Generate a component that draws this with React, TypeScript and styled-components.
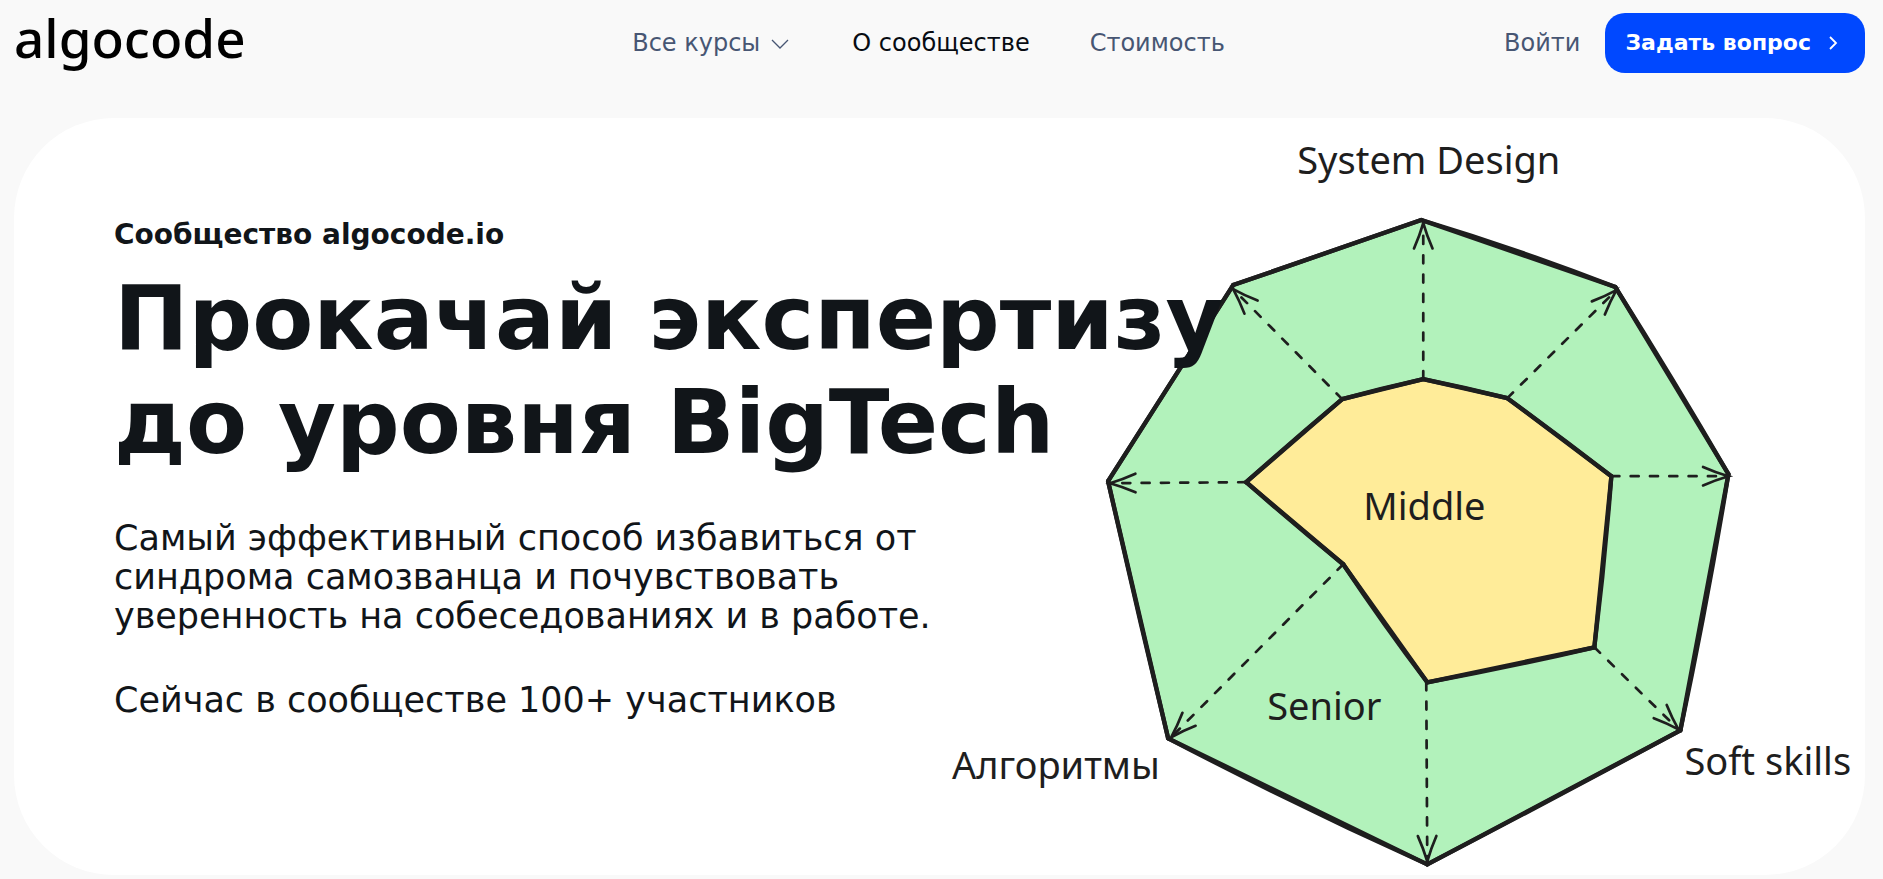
import React from 'react';
import styled, { createGlobalStyle } from 'styled-components';

const GlobalStyle = createGlobalStyle`
  *, *::before, *::after { box-sizing: border-box; }
  body {
    margin: 0;
    background: #f9f9f9;
    color: #111519;
    font-family: "DejaVu Sans", sans-serif;
  }
`;

const Page = styled.div`
  padding: 13px 18px 4px 14px;
`;

const Header = styled.header`
  display: grid;
  grid-template-columns: 1fr auto 1fr;
  align-items: center;
  height: 60px;
  margin-bottom: 45px;
`;

const Logo = styled.a`
  align-self: start;
  justify-self: start;
  color: #000;
  font: 500 53px/50px "Noto Sans", sans-serif;
  text-decoration: none;
`;

const Nav = styled.nav`
  display: flex;
  align-items: center;
  gap: 60px;
  margin-right: 22px;
`;

const NavLink = styled.a<{ $active?: boolean }>`
  display: flex;
  align-items: center;
  gap: 8px;
  color: ${({ $active }) => ($active ? '#070b12' : '#475673')};
  font-size: 24px;
  line-height: 28px;
  text-decoration: none;
  white-space: nowrap;
`;

const Actions = styled.div`
  display: flex;
  align-items: center;
  justify-self: end;
  gap: 25px;
`;

const AskButton = styled.button`
  display: flex;
  align-items: center;
  gap: 10px;
  height: 60px;
  padding: 0 20px;
  border: 0;
  border-radius: 20px;
  background: #0048ff;
  color: #fff;
  font: 700 22px/28px "DejaVu Sans", sans-serif;
  white-space: nowrap;
  cursor: pointer;
`;

const Hero = styled.main`
  display: grid;
  grid-template-columns: minmax(0, 1fr) minmax(0, 1fr);
  border-radius: 100px;
  background: #fff;
`;

const Intro = styled.section`
  z-index: 1;
  padding: 100px 0 0 100px;
  white-space: nowrap;
`;

const Eyebrow = styled.p`
  margin: 0 0 14px;
  font-size: 28px;
  font-weight: 700;
  line-height: 34px;
`;

const Title = styled.h1`
  margin: 0 0 45px;
  font-size: 89px;
  font-weight: 700;
  line-height: 104px;
`;

const Text = styled.p`
  margin: 0 0 45px;
  font-size: 35px;
  line-height: 39px;
`;

const Diagram = styled.svg`
  display: block;
  width: 100%;
  height: auto;
`;

const Label = styled.text`
  fill: #1e1e1e;
  font: 400 38px "Noto Sans", sans-serif;
`;

const INK = '#1e1e1e';

type Point = [number, number];
/* [x, y, how far the second pen stroke of the edge to the next vertex bows out] */
type Vertex = [number, number, number];

const senior: Vertex[] = [
  [481, 102, 4],
  [675, 169, 2],
  [788, 356, 3],
  [740, 612, 1],
  [487, 746, 4],
  [228, 620, 1],
  [168, 363, 0],
  [293, 167, 0],
];

const middle: Vertex[] = [
  [483, 261, 1],
  [567, 280, 1],
  [671, 358, 2],
  [654, 529, 2],
  [487, 564, 2],
  [403, 446, 1],
  [306, 364, 1],
  [402, 281, 1],
];

const arrows: { from: Point; to: Point }[] = [
  { from: [483, 261], to: [483, 105] },
  { from: [402, 281], to: [293, 171] },
  { from: [567, 280], to: [676, 172] },
  { from: [306, 364], to: [170, 365] },
  { from: [671, 358], to: [788, 358] },
  { from: [654, 529], to: [738, 611] },
  { from: [486, 564], to: [487, 743] },
  { from: [403, 446], to: [231, 619] },
];

function Shape({ vertices, fill }: { vertices: Vertex[]; fill: string }) {
  return (
    <g stroke={INK} strokeWidth={4.3} strokeLinejoin="round" strokeLinecap="round">
      <polygon points={vertices.map(([x, y]) => `${x},${y}`).join(' ')} fill={fill} />
      {vertices.map(([x, y, bow], i) => {
        const [nx, ny] = vertices[(i + 1) % vertices.length];
        const length = Math.hypot(nx - x, ny - y);
        const cx = (x + nx) / 2 + ((ny - y) / length) * bow;
        const cy = (y + ny) / 2 - ((nx - x) / length) * bow;
        return <path key={i} d={`M${x} ${y}Q${cx} ${cy} ${nx} ${ny}`} fill="none" />;
      })}
    </g>
  );
}

function Arrow({ from, to }: { from: Point; to: Point }) {
  const angle = Math.atan2(from[1] - to[1], from[0] - to[0]);
  const wing = (turn: number, reach: number) =>
    `${to[0] + Math.cos(angle + turn) * reach} ${to[1] + Math.sin(angle + turn) * reach}`;
  return (
    <g fill="none" stroke={INK} strokeWidth={2.7} strokeLinecap="round">
      <path d={`M${from[0]} ${from[1]}L${to[0]} ${to[1]}`} strokeDasharray="8 11.3" />
      <path d={`M${wing(0.35, 27)}Q${wing(0.28, 13)} ${to[0]} ${to[1]}Q${wing(-0.28, 13)} ${wing(-0.35, 27)}`} />
    </g>
  );
}

export default function App() {
  return (
    <>
      <GlobalStyle />
      <Page>
        <Header>
          <Logo href="#">algocode</Logo>
          <Nav>
            <NavLink href="#courses">
              Все курсы
              <svg width="24" height="24" viewBox="0 0 24 24" fill="none" stroke="currentColor" strokeWidth="1.3" aria-hidden="true">
                <path d="M4 9l8 8 8-8" />
              </svg>
            </NavLink>
            <NavLink href="#community" $active>О сообществе</NavLink>
            <NavLink href="#price">Стоимость</NavLink>
          </Nav>
          <Actions>
            <NavLink href="#login">Войти</NavLink>
            <AskButton type="button">
              Задать вопрос
              <svg width="24" height="24" viewBox="0 0 24 24" fill="none" stroke="currentColor" strokeWidth="1.8" aria-hidden="true">
                <path d="M9 6l6 6-6 6" />
              </svg>
            </AskButton>
          </Actions>
        </Header>
        <Hero>
          <Intro>
            <Eyebrow>Сообщество algocode.io</Eyebrow>
            <Title>
              Прокачай экспертизу
              <br />
              до уровня BigTech
            </Title>
            <Text>
              Самый эффективный способ избавиться от
              <br />
              синдрома самозванца и почувствовать
              <br />
              уверенность на собеседованиях и в работе.
            </Text>
            <Text>Сейчас в сообществе 100+ участников</Text>
          </Intro>
          <Diagram viewBox="0 0 925 757" role="img" aria-label="Middle, Senior">
            <Shape vertices={senior} fill="#b2f2bb" />
            <Shape vertices={middle} fill="#ffec99" />
            {arrows.map((arrow, i) => (
              <Arrow key={i} {...arrow} />
            ))}
            <Label x="357" y="56">System Design</Label>
            <Label x="423" y="402">Middle</Label>
            <Label x="327" y="602">Senior</Label>
            <Label x="12" y="661">Алгоритмы</Label>
            <Label x="744" y="657">Soft skills</Label>
          </Diagram>
        </Hero>
      </Page>
    </>
  );
}
